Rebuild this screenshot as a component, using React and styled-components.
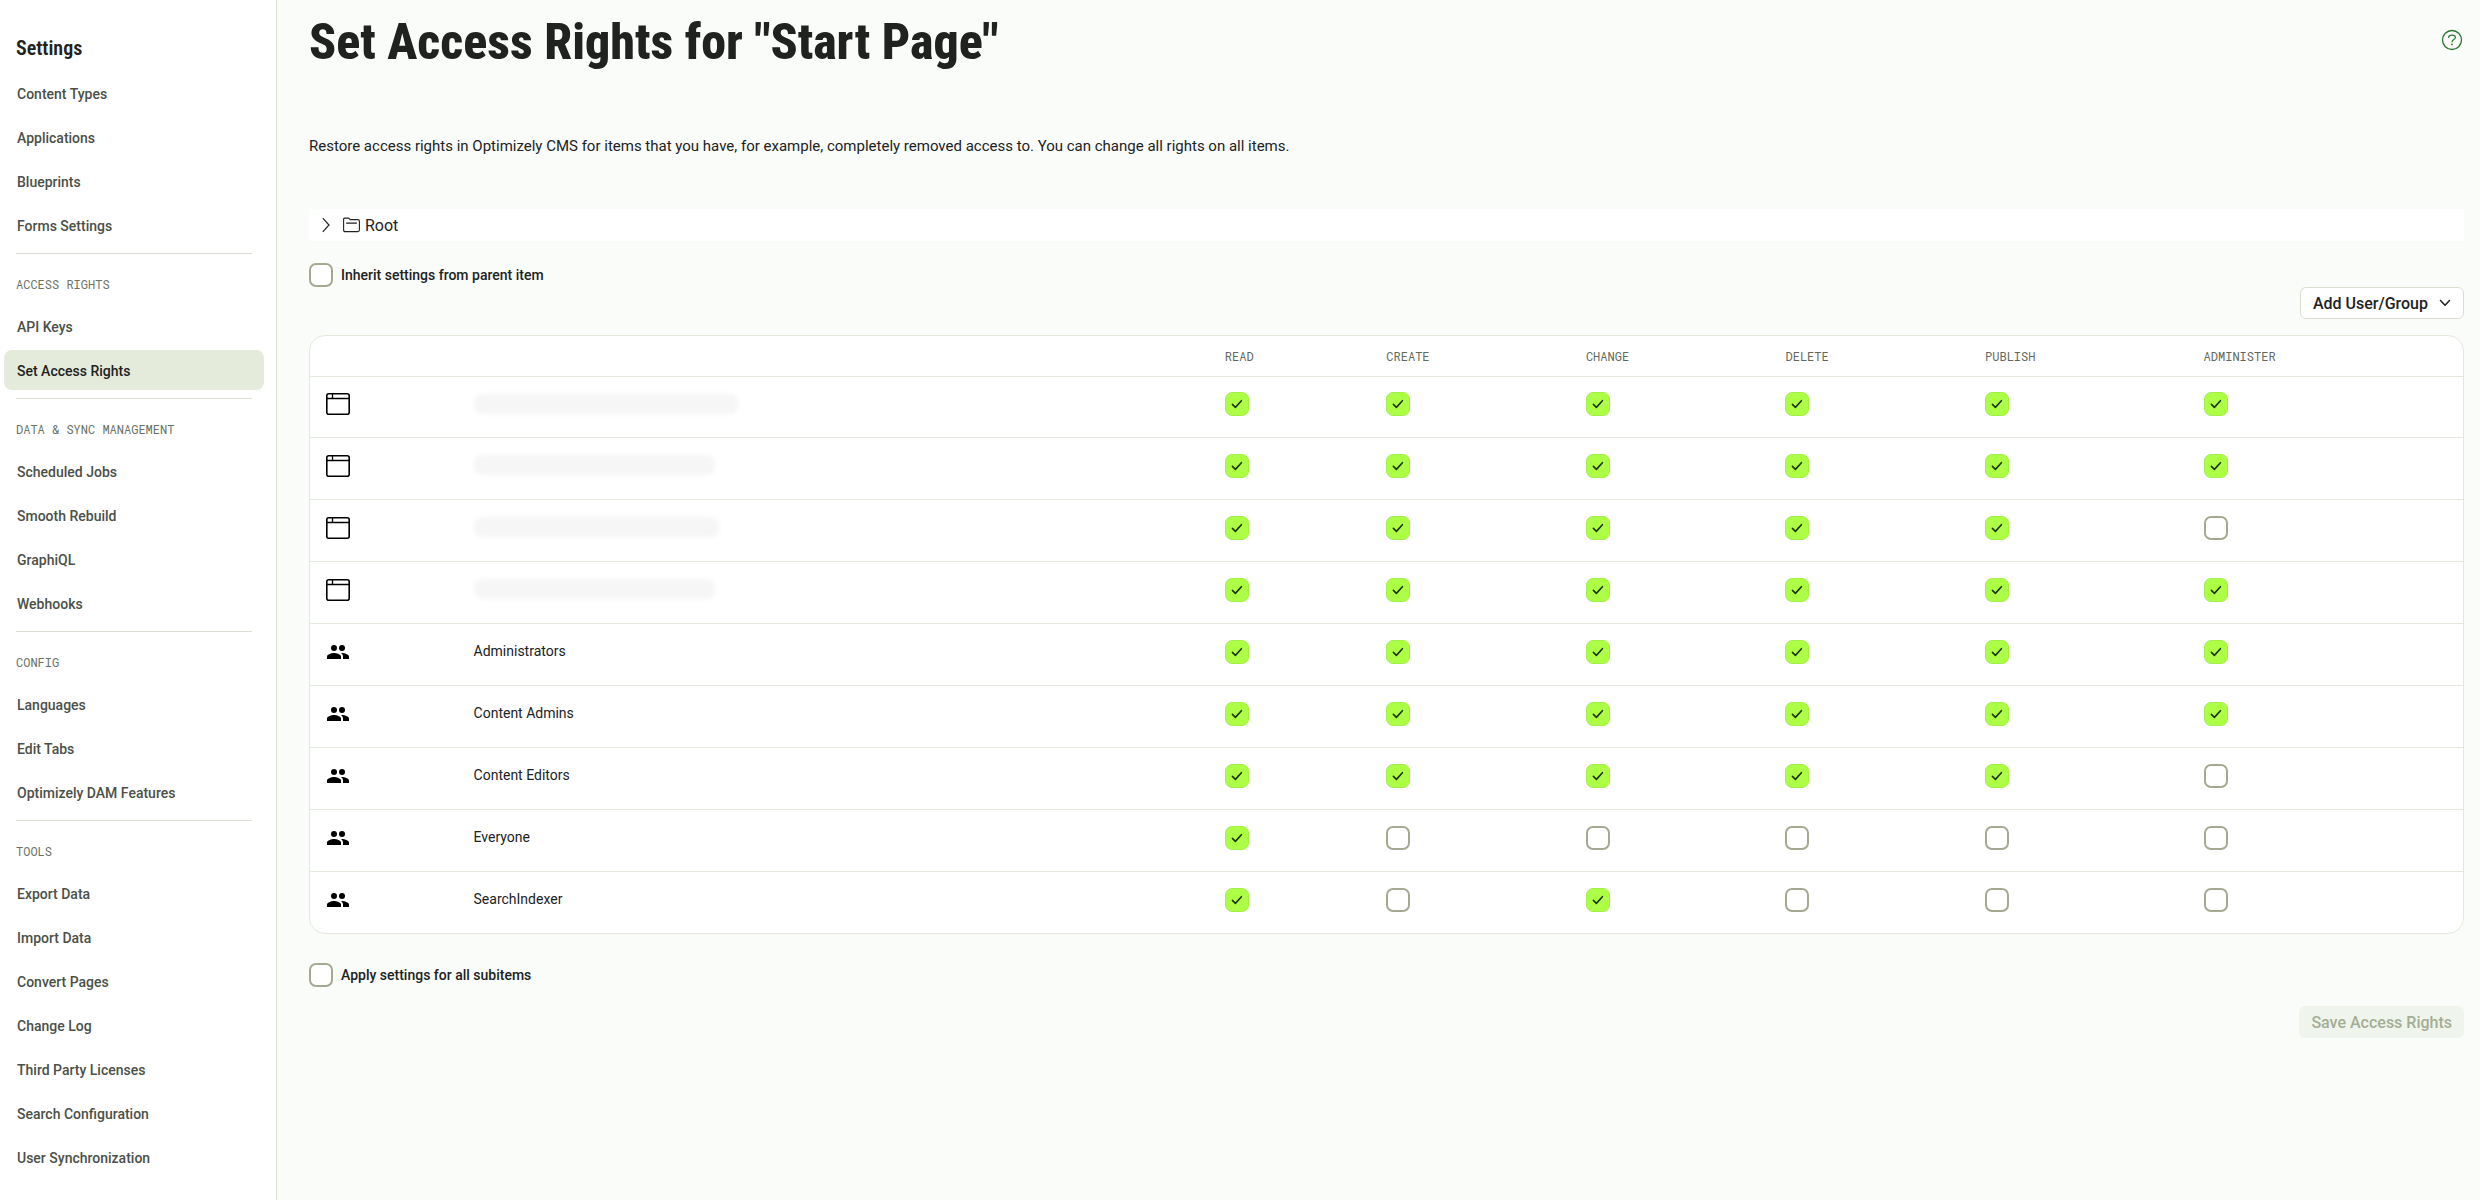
import React, { useState } from "react";
import styled, { createGlobalStyle } from "styled-components";

const navSections = [
  {
    items: ["Content Types", "Applications", "Blueprints", "Forms Settings"],
  },
  {
    title: "Access Rights",
    items: ["API Keys", "Set Access Rights"],
  },
  {
    title: "Data & Sync Management",
    items: ["Scheduled Jobs", "Smooth Rebuild", "GraphiQL", "Webhooks"],
  },
  {
    title: "Config",
    items: ["Languages", "Edit Tabs", "Optimizely DAM Features"],
  },
  {
    title: "Tools",
    items: [
      "Export Data",
      "Import Data",
      "Convert Pages",
      "Change Log",
      "Third Party Licenses",
      "Search Configuration",
      "User Synchronization",
    ],
  },
];

const rights = ["Read", "Create", "Change", "Delete", "Publish", "Administer"];

// one flag per entry in `rights`
const initialEntries = [
  { id: "app-1", type: "app", hiddenWidth: 264, access: [1, 1, 1, 1, 1, 1] },
  { id: "app-2", type: "app", hiddenWidth: 241, access: [1, 1, 1, 1, 1, 1] },
  { id: "app-3", type: "app", hiddenWidth: 245, access: [1, 1, 1, 1, 1, 0] },
  { id: "app-4", type: "app", hiddenWidth: 241, access: [1, 1, 1, 1, 1, 1] },
  { id: "administrators", type: "group", name: "Administrators", access: [1, 1, 1, 1, 1, 1] },
  { id: "content-admins", type: "group", name: "Content Admins", access: [1, 1, 1, 1, 1, 1] },
  { id: "content-editors", type: "group", name: "Content Editors", access: [1, 1, 1, 1, 1, 0] },
  { id: "everyone", type: "group", name: "Everyone", access: [1, 0, 0, 0, 0, 0] },
  { id: "search-indexer", type: "group", name: "SearchIndexer", access: [1, 0, 1, 0, 0, 0] },
];

const HelpIcon = () => (
  <svg width="24" height="24" viewBox="0 0 24 24" fill="none" aria-hidden="true">
    <circle cx="12" cy="12" r="9.5" stroke="currentColor" strokeWidth="1.3" />
    <path
      d="M8.6 9.4C8.8 7.900 10.100 7.200 12 7.200s3.400.8 3.400 2.300c0 2.100-3.300 2-3.300 4.300"
      stroke="currentColor"
      strokeWidth="1.2"
      strokeLinecap="round"
    />
    <circle cx="12" cy="16.4" r="0.9" fill="currentColor" />
  </svg>
);

const ChevronRight = () => (
  <svg width="8" height="16" viewBox="0 0 8 16" fill="none" aria-hidden="true">
    <path d="M0.8 1.2L7 8l-6.2 6.8" stroke="currentColor" strokeWidth="1.2" />
  </svg>
);

const ChevronDown = () => (
  <svg width="12" height="8" viewBox="0 0 12 8" fill="none" aria-hidden="true">
    <path
      d="M1.5 1.5L6 6.2l4.5-4.7"
      stroke="currentColor"
      strokeWidth="1.5"
      strokeLinecap="round"
      strokeLinejoin="round"
    />
  </svg>
);

const FolderIcon = () => (
  <svg width="17" height="16" viewBox="0 0 17 16" fill="none" aria-hidden="true">
    <path
      d="M.6 2.2Q.6 1.1 1.7 1.1h3.6q.6 0 1 .5l.9 1h7.6q1.6 0 1.6 1.5v9q0 1.5-1.6 1.5H2.2Q.6 14.6.6 13.1z M3.1 6.1h10.8"
      stroke="currentColor"
      strokeWidth="1.1"
    />
  </svg>
);

const AppIcon = () => (
  <svg width="24" height="24" viewBox="0 0 24 24" fill="none" aria-label="Application" role="img">
    <rect x="0.8" y="1.8" width="22.4" height="20.4" rx="2" stroke="#000" strokeWidth="1.6" />
    <path d="M1 6.500h22" stroke="#000" strokeWidth="1.5" />
    <path d="M6.500 2v4.500" stroke="#000" strokeWidth="1.3" />
  </svg>
);

const GroupIcon = () => (
  <svg width="24" height="24" viewBox="0 0 24 24" fill="#000" aria-label="Group" role="img">
    <circle cx="8" cy="8" r="3" />
    <circle cx="16" cy="8" r="3" />
    <path d="M1 19v-2.500C1 14.200 5.700 13 8 13s7 1.200 7 3.500V19z" />
    <path d="M17 19v-2.500c0-1.500-.8-2.600-2-3.450.4-.03.7-.05 1-.05 2.300 0 7 1.200 7 3.500V19z" />
  </svg>
);

const App = () => {
  const [active, setActive] = useState("Set Access Rights");
  const [entries, setEntries] = useState(initialEntries);
  const [inherit, setInherit] = useState(false);
  const [applyAll, setApplyAll] = useState(false);

  const toggleRight = (id, index) => {
    setEntries((prev) =>
      prev.map((entry) =>
        entry.id === id
          ? { ...entry, access: entry.access.map((v, i) => (i === index ? !v : v)) }
          : entry
      )
    );
  };

  return (
    <>
      <GlobalStyle />
      <Layout>
        <Sidebar>
          <h2>Settings</h2>
          <nav>
            {navSections.map((section) => (
              <NavSection key={section.title || "general"}>
                {section.title && <h3>{section.title}</h3>}
                <NavList>
                  {section.items.map((item) => (
                    <li key={item}>
                      <NavLink
                        href="#"
                        $active={item === active}
                        onClick={() => setActive(item)}
                      >
                        {item}
                      </NavLink>
                    </li>
                  ))}
                </NavList>
              </NavSection>
            ))}
          </nav>
        </Sidebar>

        <Main>
          <Header>
            <h1>Set Access Rights for "Start Page"</h1>
            <HelpButton type="button" aria-label="Help">
              <HelpIcon />
            </HelpButton>
          </Header>
          <Description>
            Restore access rights in Optimizely CMS for items that you have, for
            example, completely removed access to. You can change all rights on
            all items.
          </Description>

          <TreeRow type="button" aria-expanded="false">
            <ChevronRight />
            <TreeLabel>
              <FolderIcon />
              Root
            </TreeLabel>
          </TreeRow>

          <CheckLabel>
            <Checkbox checked={inherit} onChange={() => setInherit((prev) => !prev)} />
            Inherit settings from parent item
          </CheckLabel>

          <Actions>
            <AddButton type="button">
              Add User/Group
              <ChevronDown />
            </AddButton>
          </Actions>

          <TableCard>
            <RightsTable>
              <colgroup>
                <col className="col-icon" />
                <col className="col-name" />
                <col className="col-read" />
                <col className="col-right" />
                <col className="col-right" />
                <col className="col-right" />
                <col className="col-publish" />
                <col />
              </colgroup>
              <thead>
                <tr>
                  <th aria-label="Type" />
                  <th aria-label="Name" />
                  {rights.map((right) => (
                    <th key={right} scope="col">
                      {right}
                    </th>
                  ))}
                </tr>
              </thead>
              <tbody>
                {entries.map((entry) => (
                  <tr key={entry.id}>
                    <td>{entry.type === "app" ? <AppIcon /> : <GroupIcon />}</td>
                    <NameCell>
                      {entry.name || <HiddenName style={{ width: entry.hiddenWidth }} />}
                    </NameCell>
                    {entry.access.map((allowed, i) => (
                      <td key={rights[i]}>
                        <Checkbox
                          aria-label={`${rights[i]} ${entry.name || entry.id}`}
                          checked={!!allowed}
                          onChange={() => toggleRight(entry.id, i)}
                        />
                      </td>
                    ))}
                  </tr>
                ))}
              </tbody>
            </RightsTable>
          </TableCard>

          <CheckLabel>
            <Checkbox checked={applyAll} onChange={() => setApplyAll((prev) => !prev)} />
            Apply settings for all subitems
          </CheckLabel>

          <Footer>
            <SaveButton type="button" disabled>
              Save Access Rights
            </SaveButton>
          </Footer>
        </Main>
      </Layout>
    </>
  );
};

export default App;

const GlobalStyle = createGlobalStyle`
  * {
    box-sizing: border-box;
  }
  body {
    margin: 0;
    background: #fafcf9;
    color: #20221f;
    font-family: Roboto, "Liberation Sans", sans-serif;
    font-size: 14px;
    line-height: 20px;
  }
  h1, h2, h3, p, ul {
    margin: 0;
    padding: 0;
  }
  button {
    font-family: inherit;
    cursor: pointer;
  }
  svg {
    display: block;
    flex-shrink: 0;
  }
`;

const Layout = styled.div`
  display: flex;
  min-height: 100vh;
`;

const Sidebar = styled.aside`
  flex: 0 0 277px;
  background: #fff;
  border-right: 1px solid #dbe1d1;
  padding-top: 36px;

  h2 {
    font-family: "Roboto Condensed", Roboto, sans-serif;
    font-size: 20px;
    font-weight: 600;
    line-height: 24px;
    padding-left: 16px;
    margin-bottom: 13px;
  }
`;

const NavSection = styled.section`
  & + & {
    margin-top: 8px;
  }
  & + &::before {
    content: "";
    display: block;
    height: 1px;
    margin: 0 24px 0 16px;
    background: #dadfd3;
  }
  h3 {
    font-family: "Roboto Mono", "Liberation Mono", monospace;
    font-size: 12px;
    font-weight: 400;
    line-height: 16px;
    padding: 22px 16px 14px;
    color: #6a7264;
    text-transform: uppercase;
  }
`;

const NavList = styled.ul`
  display: flex;
  flex-direction: column;
  gap: 4px;
  padding: 0 12px 0 4px;
  list-style: none;
`;

const NavLink = styled.a`
  display: flex;
  align-items: center;
  height: 40px;
  padding: 2px 13px 0;
  border-radius: 8px;
  font-weight: 500;
  text-decoration: none;
  color: ${(props) => (props.$active ? "#20221f" : "#4b5048")};
  background: ${(props) => (props.$active ? "#e5ebdb" : "transparent")};
`;

const Main = styled.main`
  flex: 1;
  min-width: 0;
  padding: 12px 16px 32px 32px;
`;

const Header = styled.header`
  display: flex;
  justify-content: space-between;
  align-items: flex-start;

  h1 {
    font-family: "Roboto Condensed", Roboto, sans-serif;
    font-size: 50px;
    font-weight: 800;
    line-height: 60px;
  }
`;

const HelpButton = styled.button`
  border: none;
  background: none;
  padding: 16px 0;
  color: #2a7530;
`;

const Description = styled.p`
  margin: 62px 0 51px;
  font-size: 15px;
  line-height: 24px;
`;

const TreeRow = styled.button`
  display: flex;
  align-items: center;
  gap: 13px;
  width: 100%;
  height: 32px;
  padding: 0 13px;
  border: none;
  background: #fff;
  color: #20221f;
  font-size: 16px;
`;

const TreeLabel = styled.span`
  display: flex;
  align-items: center;
  gap: 5px;
`;

const CheckLabel = styled.label`
  display: flex;
  align-items: center;
  gap: 8px;
  width: fit-content;
  margin-top: 22px;
  font-weight: 500;
`;

const Checkbox = styled.input.attrs({ type: "checkbox" })`
  appearance: none;
  display: block;
  width: 24px;
  height: 24px;
  margin: 0;
  border: 2px solid #a6a992;
  border-radius: 7px;
  background: #fff;
  cursor: pointer;

  &:checked {
    border: 1px solid #a2ef49;
    background: #adff45
      url("data:image/svg+xml,%3Csvg xmlns='http://www.w3.org/2000/svg' viewBox='0 0 22 22' fill='none' stroke='%231d3314' stroke-width='1.6' stroke-linecap='round' stroke-linejoin='round'%3E%3Cpath d='M6.400 11.400l3 3 6-6.700'/%3E%3C/svg%3E")
      center / 22px no-repeat;
  }
`;

const Actions = styled.div`
  display: flex;
  justify-content: flex-end;
  margin-bottom: 16px;
`;

const AddButton = styled.button`
  display: flex;
  align-items: center;
  gap: 11px;
  height: 32px;
  padding: 0 12px;
  border: 1px solid #d9dfd0;
  border-radius: 6px;
  background: #fff;
  color: #20221f;
  font-size: 16px;
  font-weight: 500;
`;

const TableCard = styled.div`
  overflow: hidden;
  border: 1px solid #e5e9dd;
  border-radius: 16px;
  background: #fff;

  & + ${CheckLabel} {
    margin-top: 29px;
  }
`;

const RightsTable = styled.table`
  width: 100%;
  table-layout: fixed;
  border-collapse: separate;
  border-spacing: 0;

  .col-icon {
    width: 6.9%;
  }
  .col-name {
    width: 34.85%;
  }
  .col-read {
    width: 7.5%;
  }
  .col-right {
    width: 9.27%;
  }
  .col-publish {
    width: 10.15%;
  }
  th,
  td {
    padding: 0 16px;
    border-bottom: 1px solid #e5e9dd;
    text-align: left;
  }
  th {
    height: 41px;
    font-family: "Roboto Mono", "Liberation Mono", monospace;
    font-size: 12px;
    font-weight: 400;
    line-height: 16px;
    color: #62695c;
    text-transform: uppercase;
  }
  td {
    height: 62px;
    padding-bottom: 5px;
  }
  tbody tr:first-child td {
    height: 61px;
    padding-bottom: 6px;
  }
  tbody tr:last-child td {
    height: 61px;
    border-bottom: none;
  }
`;

const NameCell = styled.td`
  && {
    padding-left: 15px;
    padding-bottom: 8px;
  }
`;

const HiddenName = styled.span`
  display: block;
  height: 20px;
  border-radius: 8px;
  background: #f6f6f6;
  filter: blur(2px);
`;

const Footer = styled.div`
  display: flex;
  justify-content: flex-end;
  margin-top: 19px;
`;

const SaveButton = styled.button`
  height: 32px;
  padding: 0 12px;
  border: none;
  border-radius: 6px;
  background: #eff5ec;
  color: #a3ad95;
  font-size: 16px;
  font-weight: 500;

  &:disabled {
    cursor: default;
  }
`;
